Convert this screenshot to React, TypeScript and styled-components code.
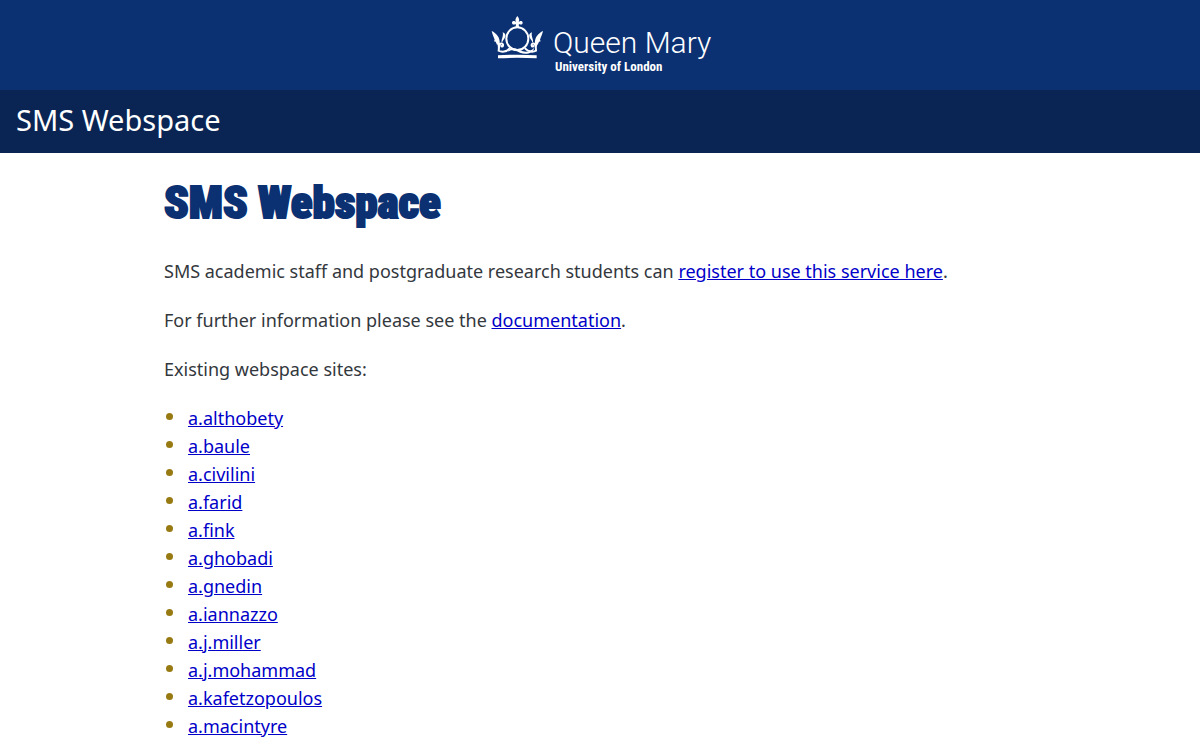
import React from "react";
import styled, { createGlobalStyle } from "styled-components";

const GlobalStyle = createGlobalStyle`
  *, *::before, *::after { box-sizing: border-box; }
  body {
    margin: 0;
    background: #fff;
    color: #33383d;
    font-family: "Noto Sans", "Open Sans", sans-serif;
    font-size: 18px;
    line-height: 28px;
  }
`;

const Masthead = styled.header`
  background: #0b3173;
`;

const LogoBar = styled.div`
  display: flex;
  justify-content: center;
  padding: 10px 0;
`;

const LogoLink = styled.a`
  display: block;
  height: 70px;
`;

const TitleBar = styled.div`
  padding: 12px 16px 15px;
  background: #0a2553;
  color: #fff;
  font-size: 29px;
  line-height: 36px;
`;

const Content = styled.main`
  max-width: 904px;
  margin: 0 auto;
  padding: 20px 16px;
`;

const Heading = styled.h1`
  margin: 0 0 24px;
  color: #0b3173;
  font-family: Impact, "Roboto Condensed", sans-serif;
  font-size: 45px;
  font-weight: 900;
  line-height: 60px;
  -webkit-text-stroke: 2px #0b3173;
`;

const Paragraph = styled.p`
  margin: 0 0 21px;
`;

const Link = styled.a`
  color: #0000c8;
  text-decoration: underline;
`;

const SiteList = styled.ul`
  margin: 0;
  padding: 0;
  list-style: none;
`;

const SiteItem = styled.li`
  display: flex;
  align-items: center;
  gap: 15px;
  padding-left: 2px;

  &::before {
    content: "";
    width: 7px;
    height: 7px;
    margin-bottom: 3px;
    border-radius: 50%;
    background: #987a12;
  }
`;

const sites = [
  "a.althobety",
  "a.baule",
  "a.civilini",
  "a.farid",
  "a.fink",
  "a.ghobadi",
  "a.gnedin",
  "a.iannazzo",
  "a.j.miller",
  "a.j.mohammad",
  "a.kafetzopoulos",
  "a.macintyre",
];

function CrownSide() {
  return (
    <>
      <path d="M20 63 C33 69 46 82 44 100 L36 104 L32 95 L27 94 L29 89 C26 81 22 72 20 63 Z" />
      <path d="M53 67 C62 70 64 78 58 86 C55 90 52 94 51 99 C46 91 57 80 53 67 Z" />
      <path
        d="M39 98 Q43 110 41 122 C50 127 64 126 73 116 M42 112 C41 98 56 97 54 107 C53 111 49 110 49 108"
        fill="none"
        stroke="#fff"
        strokeWidth="6"
        strokeLinecap="round"
      />
    </>
  );
}

function Logo() {
  return (
    <svg width="230" height="70" viewBox="0 0 230 70" role="img" aria-label="Queen Mary University of London">
      <g transform="scale(0.33333)" fill="#fff" stroke="none">
        {/* fleur-de-lis */}
        <path d="M97 18 C103 25 104 31 101 37 C105 31 113 32 113 38 C113 44 106 45 103 42 L101 44 L103 54 H91 L93 44 L91 42 C88 45 81 44 81 38 C81 32 89 31 93 37 C90 31 91 25 97 18 Z" />
        {/* letter ring and its tail */}
        <ellipse cx="97" cy="86" rx="33" ry="34" fill="none" stroke="#fff" strokeWidth="6" />
        <path d="M70 121 C82 110 95 116 105 121 C119 128 136 126 148 113 C143 131 123 135 105 128 C92 123 82 117 70 125 Z" />
        {/* mirrored side leaves */}
        <CrownSide />
        <g transform="translate(194 0) scale(-1 1)">
          <CrownSide />
        </g>
        {/* base band */}
        <path d="M39 136 Q97 132 155 136 V145 Q97 142 39 145 Z" />
      </g>
      <text x="68" y="43" fill="#fff" fontFamily="Roboto, sans-serif" fontSize="30" fontWeight="300">
        Queen Mary
      </text>
      <text x="70" y="61" fill="#fff" fontFamily="'Roboto Condensed', sans-serif" fontSize="13" fontWeight="700">
        University of London
      </text>
    </svg>
  );
}

export default function App() {
  return (
    <>
      <GlobalStyle />
      <Masthead>
        <LogoBar>
          <LogoLink href="#home">
            <Logo />
          </LogoLink>
        </LogoBar>
        <TitleBar>SMS Webspace</TitleBar>
      </Masthead>
      <Content>
        <Heading>SMS Webspace</Heading>
        <Paragraph>
          SMS academic staff and postgraduate research students can{" "}
          <Link href="#register">register to use this service here</Link>.
        </Paragraph>
        <Paragraph>
          For further information please see the <Link href="#documentation">documentation</Link>.
        </Paragraph>
        <Paragraph>Existing webspace sites:</Paragraph>
        <SiteList>
          {sites.map((site) => (
            <SiteItem key={site}>
              <Link href={`#${site}`}>{site}</Link>
            </SiteItem>
          ))}
        </SiteList>
      </Content>
    </>
  );
}
